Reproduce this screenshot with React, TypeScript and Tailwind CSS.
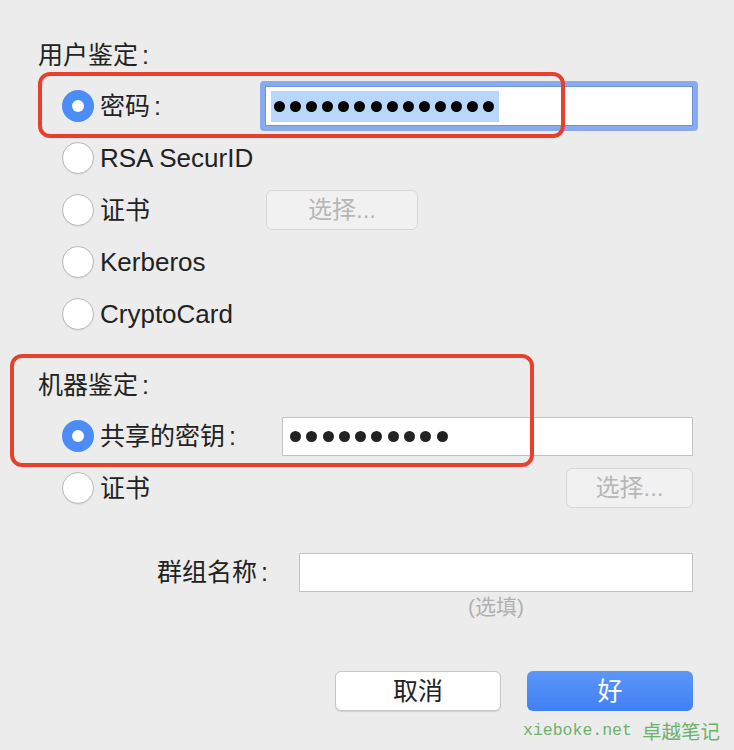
import React from "react";

const cjk = "font-['Liberation_Sans','Noto_Sans_CJK_SC',sans-serif]";

function Radio({ checked = false }: { checked?: boolean }) {
  if (checked) {
    return (
      <span className="flex h-[32px] w-[32px] shrink-0 items-center justify-center rounded-full bg-[#4b8cf6]">
        <span className="h-[12px] w-[12px] rounded-full bg-white" />
      </span>
    );
  }
  return (
    <span className="h-[32px] w-[32px] shrink-0 rounded-full border border-[#b9b9b9] bg-white shadow-[0_1px_1px_rgba(0,0,0,0.06)]" />
  );
}

function Dots({ count, color, gap }: { count: number; color: string; gap: string }) {
  return (
    <div className={`flex items-center ${gap}`}>
      {Array.from({ length: count }).map((_, i) => (
        <span key={i} className={`h-[11px] w-[11px] rounded-full ${color}`} />
      ))}
    </div>
  );
}

function Row({ children }: { children: React.ReactNode }) {
  return <div className="flex h-[52px] items-center">{children}</div>;
}

// label text with the slightly detached colon seen on macOS
function Label({ text, className = "" }: { text: string; className?: string }) {
  return (
    <span className={`shrink-0 text-[25px] leading-none ${className}`}>
      {text}
      <span className="ml-[4px]">:</span>
    </span>
  );
}

function ChooseButton({ width }: { width: string }) {
  return (
    <div
      className={`flex h-[40px] shrink-0 ${width} items-center justify-center rounded-[6px] border border-[#d6d6d6] bg-[#f1f1f1] text-[24px] leading-none text-[#b6b6b6]`}
    >
      选择...
    </div>
  );
}

export default function App() {
  return (
    <div
      className={`relative h-[750px] w-[734px] overflow-hidden bg-[#ececec] pl-[38px] pr-[41px] text-[#222] ${cjk}`}
    >
      {/* ---------- 用户鉴定 ---------- */}
      <div className="mt-[40px] flex h-[30px] items-center">
        <Label text="用户鉴定" />
      </div>

      <div className="mt-[10px] pl-[24px]">
        <Row>
          <Radio checked />
          <Label text="密码" className="ml-[6px] w-[160px]" />
          <div className="w-[438px] shrink-0 rounded-[4px] bg-[#89abee] p-[5px]">
            <div className="flex h-[40px] items-center border border-[#6e93df] bg-white pl-[5px]">
              <div className="flex h-[31px] w-[228px] items-center bg-[#b8d7fb] pl-[3px]">
                <Dots count={14} color="bg-black" gap="gap-[5.1px]" />
              </div>
            </div>
          </div>
        </Row>
        <Row>
          <Radio />
          <span className="ml-[6px] text-[26px] leading-none">RSA SecurID</span>
        </Row>
        <Row>
          <Radio />
          <span className="ml-[6px] w-[166px] shrink-0 text-[25px] leading-none">证书</span>
          <ChooseButton width="w-[152px]" />
        </Row>
        <Row>
          <Radio />
          <span className="ml-[6px] text-[26px] leading-none">Kerberos</span>
        </Row>
        <Row>
          <Radio />
          <span className="ml-[6px] text-[26px] leading-none">CryptoCard</span>
        </Row>
      </div>

      {/* ---------- 机器鉴定 ---------- */}
      <div className="mt-[30px] flex h-[30px] items-center">
        <Label text="机器鉴定" />
      </div>

      <div className="mt-[10px] pl-[24px]">
        <Row>
          <Radio checked />
          <Label text="共享的密钥" className="ml-[6px] w-[182px]" />
          <div className="flex h-[39px] flex-1 items-center border border-[#c3c3c3] bg-white pl-[7px]">
            <Dots count={10} color="bg-[#222]" gap="gap-[5.3px]" />
          </div>
        </Row>
        <Row>
          <Radio />
          <span className="ml-[6px] text-[25px] leading-none">证书</span>
          <div className="ml-auto">
            <ChooseButton width="w-[127px]" />
          </div>
        </Row>
      </div>

      {/* ---------- 群组名称 ---------- */}
      <div className="mt-[39px] flex items-start justify-end">
        <div className="mr-[31px] flex h-[39px] items-center">
          <Label text="群组名称" />
        </div>
        <div className="flex w-[394px] flex-col items-center">
          <div className="h-[39px] w-full border border-[#c3c3c3] bg-white" />
          <span className="mt-[5px] text-[21px] leading-[20px] text-[#b0b0b0]">(选填)</span>
        </div>
      </div>

      {/* ---------- ACTIONS ---------- */}
      <div className="mt-[54px] flex justify-end gap-[26px]">
        <button className="flex h-[40px] w-[166px] items-center justify-center rounded-[6px] border border-[#c6c6c6] bg-white text-[25px] leading-none text-[#222] shadow-[0_1px_1px_rgba(0,0,0,0.12)]">
          取消
        </button>
        <button className="flex h-[40px] w-[166px] items-center justify-center rounded-[6px] bg-gradient-to-b from-[#5b97f8] to-[#3f80f4] text-[25px] leading-none text-white">
          好
        </button>
      </div>

      {/* ---------- ANNOTATIONS ---------- */}
      <div className="pointer-events-none absolute left-[38px] top-[72px] h-[66px] w-[527px] rounded-[12px] border-[4px] border-[#e8402d]" />
      <div className="pointer-events-none absolute left-[10px] top-[354px] h-[113px] w-[524px] rounded-[12px] border-[4px] border-[#e8402d]" />

      <div className="absolute left-[523px] top-[721px] flex items-center whitespace-nowrap text-[#6cb26c]">
        <span className="font-['Liberation_Mono',monospace] text-[16.5px] leading-none">xieboke.net</span>
        <span className="ml-[10px] font-['Noto_Sans_CJK_SC',sans-serif] text-[19.5px] leading-none">卓越笔记</span>
      </div>
    </div>
  );
}
